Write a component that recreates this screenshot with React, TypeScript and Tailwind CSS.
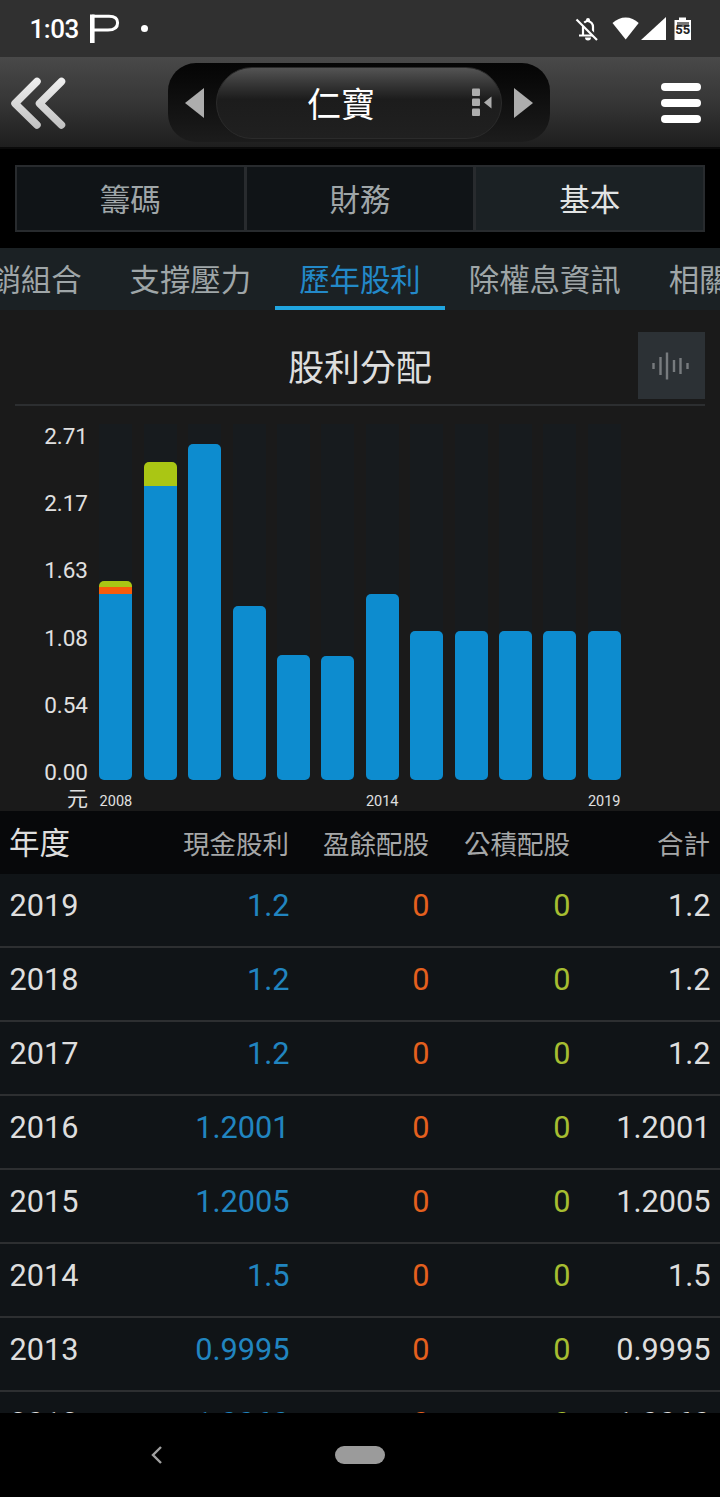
import clsx from "clsx";

interface Dividend {
  year: number;
  cash: string;
  earnings: string;
  reserve: string;
  total: string;
}

interface Bar {
  year: number;
  cash: number;
  earnings?: number;
  reserve?: number;
}

const MAIN_TABS = ["籌碼", "財務", "基本"];
const SUB_TABS = ["產銷組合", "支撐壓力", "歷年股利", "除權息資訊", "相關權證"];
const AXIS = ["2.71", "2.17", "1.63", "1.08", "0.54", "0.00"];

// segment heights in px, bottom to top: cash, earnings, capital reserve
const BARS: Bar[] = [
  { year: 2008, cash: 186, earnings: 7, reserve: 6 },
  { year: 2009, cash: 294, reserve: 24 },
  { year: 2010, cash: 336 },
  { year: 2011, cash: 174 },
  { year: 2012, cash: 125 },
  { year: 2013, cash: 124 },
  { year: 2014, cash: 186 },
  { year: 2015, cash: 149 },
  { year: 2016, cash: 149 },
  { year: 2017, cash: 149 },
  { year: 2018, cash: 149 },
  { year: 2019, cash: 149 },
];

const LABELLED_YEARS = [2008, 2014, 2019];

const DIVIDENDS: Dividend[] = [
  { year: 2019, cash: "1.2", earnings: "0", reserve: "0", total: "1.2" },
  { year: 2018, cash: "1.2", earnings: "0", reserve: "0", total: "1.2" },
  { year: 2017, cash: "1.2", earnings: "0", reserve: "0", total: "1.2" },
  { year: 2016, cash: "1.2001", earnings: "0", reserve: "0", total: "1.2001" },
  { year: 2015, cash: "1.2005", earnings: "0", reserve: "0", total: "1.2005" },
  { year: 2014, cash: "1.5", earnings: "0", reserve: "0", total: "1.5" },
  { year: 2013, cash: "0.9995", earnings: "0", reserve: "0", total: "0.9995" },
  { year: 2012, cash: "1.0060", earnings: "0", reserve: "0", total: "1.0060" },
];

function StatusBar() {
  return (
    <div className="flex h-[57px] shrink-0 items-center justify-between bg-[#303030] pl-[29.500px] pr-[28px] text-white">
      <div className="flex items-center">
        <span className="w-[60.500px] pt-[2px] text-[26px] font-medium leading-[55px] tracking-[-0.5px]">1:03</span>
        <svg width="30" height="30" viewBox="0 0 30 30" fill="none" stroke="#fff">
          <path d="M2.3 0.5V29" strokeWidth="4.6" />
          <path d="M2 2.200H19C25 2.200 27.600 4.600 27.600 8.700C27.600 13.500 24.500 16 18 16H2" strokeWidth="3" />
        </svg>
        <span className="ml-[21px] size-[7px] rounded-full bg-white" />
      </div>
      <svg width="118" height="28" viewBox="574 15 118 28" fill="none">
        <path d="M579 35.5H596M583 35V27C583 23.500 585 21.300 587.500 21M588 21C592 22 593 24 593 27V35" stroke="#fff" strokeWidth="2.2" />
        <path d="M585 37.500H591A3 3 0 0 1 585 37.500ZM586 20A2 2 0 0 1 590 20V22H586Z" fill="#fff" />
        <path d="M578 18.500L598.500 39" stroke="#303030" strokeWidth="3" />
        <path d="M576.500 19.500L597 40" stroke="#fff" strokeWidth="2.200" />
        <path d="M612.500 23C620 15.500 631.500 15.500 638.700 23L625.700 39.500Z" fill="#fff" />
        <path d="M641 40H666V17Z" fill="#fff" />
        <path d="M674.500 20H679V17.500H686V20H691V40H674.500Z" fill="#fff" />
        <path d="M677 22H689V27H677Z" fill="#777" />
        <text x="682.800" y="34" textAnchor="middle" fontSize="13" fontWeight="700" fill="#222" fontFamily="Roboto, sans-serif">55</text>
      </svg>
    </div>
  );
}

function StockHeader() {
  return (
    <header className="flex h-[92px] shrink-0 items-center justify-between border-b-2 border-[#0a0a0a] bg-linear-to-b from-[#494949] via-[#363636] to-[#1e1e1e] pl-[9px] pr-[19px]">
      <svg className="mt-[2px]" width="60" height="58" viewBox="0 0 60 58" fill="none" strokeLinecap="round" strokeLinejoin="round">
        <defs>
          <linearGradient id="chevron" x1="0" y1="0" x2="0" y2="58" gradientUnits="userSpaceOnUse">
            <stop stopColor="#f4f4f4" />
            <stop offset="1" stopColor="#bdbdbd" />
          </linearGradient>
        </defs>
        <path d="M28 7.500L6 29.500L28 51M52.500 7.500L30.500 29.500L52.500 51" stroke="url(#chevron)" strokeWidth="7.500" />
      </svg>
      <div className="ml-[20px] flex h-[79px] w-[382px] items-center justify-between rounded-[28px] bg-linear-to-b from-[#050505] via-[#101010] to-[#1c1c1c] px-[16px] pt-px">
        <svg width="21" height="32" viewBox="0 0 21 32">
          <path d="M20 1V31L1 16Z" fill="#adadad" />
        </svg>
        <div className="flex h-[72px] w-[286px] items-center rounded-full border border-[#2b2b2b] bg-linear-to-b from-[#545454] via-[#1c1c1c] via-45% to-[#202020] pl-[90px] pr-[9px]">
          <span className="pt-[5px] text-[34px] leading-none text-white">仁寶</span>
          <svg className="ml-auto" width="20" height="29" viewBox="0 0 20 29" fill="#adadad">
            <rect y="0.500" width="8" height="7.500" rx="1" />
            <rect y="10.500" width="8" height="7.500" rx="1" />
            <rect y="20.500" width="8" height="7.500" rx="1" />
            <path d="M19.500 8.500V20.500L12 14.500Z" />
          </svg>
        </div>
        <svg width="21" height="32" viewBox="0 0 21 32">
          <path d="M1 1V31L20 16Z" fill="#adadad" />
        </svg>
      </div>
      <button className="ml-[32px] mt-px flex w-[40px] flex-col gap-[8px]">
        <span className="h-[8px] rounded-full bg-white" />
        <span className="h-[8px] rounded-full bg-white" />
        <span className="h-[8px] rounded-full bg-white" />
      </button>
    </header>
  );
}

function MainTabs() {
  return (
    <div className="mx-[15px] my-4 grid h-[67px] shrink-0 grid-cols-3 gap-[3px] border-2 border-[#282b2e] bg-[#282b2e]">
      {MAIN_TABS.map((tab) => (
        <button
          key={tab}
          className={clsx(
            "pt-[5px] text-[30.500px] leading-none",
            tab === "基本" ? "bg-[#1b2124] text-[#e2e4e4]" : "bg-[#101417] text-[#9fa6a8]",
          )}
        >
          {tab}
        </button>
      ))}
    </div>
  );
}

function SubTabs() {
  return (
    <nav className="-ml-[64px] flex h-[62px] w-[860px] shrink-0 bg-[#1b2124] text-[30.400px] leading-none">
      {SUB_TABS.map((tab) => (
        <button
          key={tab}
          className={clsx(
            "shrink-0 border-b-4 px-[24px] pt-[9px] whitespace-nowrap",
            tab === "歷年股利" ? "border-[#20a5e0] text-[#2389c8]" : "border-transparent text-[#9fa6a8]",
          )}
        >
          {tab}
        </button>
      ))}
    </nav>
  );
}

function DividendChart() {
  return (
    <section className="h-[501px] shrink-0 bg-[#1a1a1a]">
      <div className="mx-[15px] flex h-[96px] items-center justify-between border-b-2 border-[#2c2e30] pt-[17px]">
        <span className="w-[67px]" />
        <h2 className="pt-[6px] text-[36px] leading-none text-[#dedede]">股利分配</h2>
        <button className="flex size-[67px] items-center justify-center bg-[#2c3135]">
          <svg width="38" height="28" viewBox="0 0 38 28" stroke="#777b7e" strokeWidth="2.400">
            <path d="M1.500 11V17M8.500 5V23M15 0.500V27.500M22 8V20M28.500 6V22M35.500 11V17" />
          </svg>
        </button>
      </div>
      <div className="flex">
        <div className="flex w-[88px] flex-col pt-[15px] text-right text-[22.500px] leading-[30px] text-[#e0e0e0]">
          <div className="flex h-[366px] flex-col justify-between">
            {AXIS.map((value) => (
              <span key={value}>{value}</span>
            ))}
          </div>
          <span className="pt-px text-[21px] leading-[22px]">元</span>
        </div>
        <div className="ml-[11.400px] flex gap-[11.400px] pt-[18px]">
          {BARS.map((bar) => (
            <div key={bar.year} className="flex w-[33px] flex-col items-center">
              <div className="flex h-[356px] w-full flex-col justify-end bg-[#171b1e]">
                <div className="overflow-hidden rounded-[5px]">
                  <div className="bg-[#aac614]" style={{ height: bar.reserve ?? 0 }} />
                  <div className="bg-[#f85c0c]" style={{ height: bar.earnings ?? 0 }} />
                  <div className="bg-[#0d8ccf]" style={{ height: bar.cash }} />
                </div>
              </div>
              {LABELLED_YEARS.includes(bar.year) && (
                <span className="mt-[12px] text-[14.500px] leading-[20px] text-[#e0e0e0]">{bar.year}</span>
              )}
            </div>
          ))}
        </div>
      </div>
    </section>
  );
}

function DividendTable() {
  return (
    <div className="h-[602px] shrink-0 overflow-hidden bg-[#101417]">
      <div className="grid h-[63px] grid-cols-[140px_140px_140px_141px_140px] items-center bg-[#07080a] px-[9px] text-right text-[26.500px] leading-none text-[#a5a7a8]">
        <span className="pt-[4px] text-left text-[30.500px] text-[#dedede]">年度</span>
        <span className="whitespace-nowrap pt-[6px]">現金股利</span>
        <span className="whitespace-nowrap pt-[6px]">盈餘配股</span>
        <span className="whitespace-nowrap pt-[6px]">公積配股</span>
        <span className="whitespace-nowrap pt-[6px]">合計</span>
      </div>
      {DIVIDENDS.map((row) => (
        <div
          key={row.year}
          className="grid h-[74px] grid-cols-[140px_140px_140px_141px_140px] items-center border-b-2 border-[#2d2f31] px-[9.500px] pb-[7px] text-right text-[30.700px] leading-none last:pb-[8px]"
        >
          <span className="text-left text-[#dedede]">{row.year}</span>
          <span className="text-[#2185c0]">{row.cash}</span>
          <span className="text-[#e4601e]">{row.earnings}</span>
          <span className="text-[#a6bd31]">{row.reserve}</span>
          <span className="text-[#dedede]">{row.total}</span>
        </div>
      ))}
    </div>
  );
}

function NavigationBar() {
  return (
    <div className="grid h-[84px] shrink-0 grid-cols-[151px_184px_50px] items-center bg-black">
      <span />
      <svg width="12" height="20" viewBox="0 0 12 20" fill="none" stroke="#a0a0a0" strokeWidth="2.400">
        <path d="M10 2L2 10L10 18" />
      </svg>
      <span className="h-[18px] rounded-full bg-[#9b9b9b]" />
    </div>
  );
}

export default function App() {
  return (
    <div className="flex h-[1497px] w-[720px] flex-col overflow-hidden bg-black font-[Roboto,'Noto_Sans_CJK_TC',sans-serif]">
      <StatusBar />
      <StockHeader />
      <MainTabs />
      <SubTabs />
      <DividendChart />
      <DividendTable />
      <NavigationBar />
    </div>
  );
}
